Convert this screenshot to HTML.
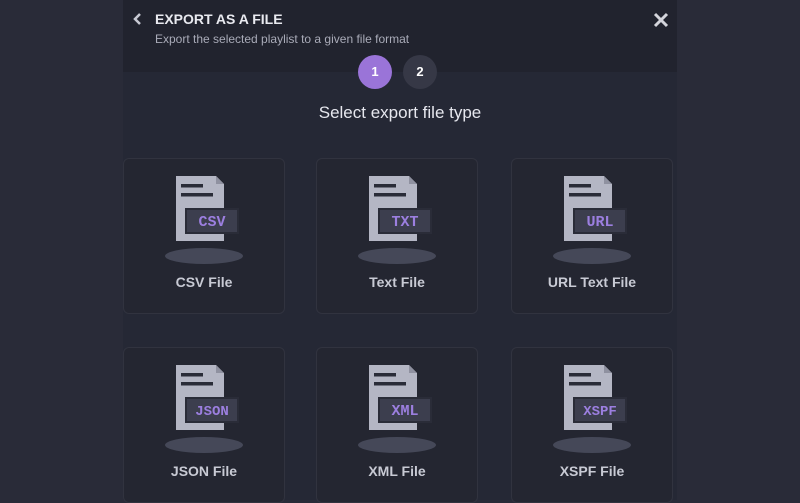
<!DOCTYPE html>
<html><head><style>
body{margin:0;width:800px;height:500px;background:#292b38;font-family:"Liberation Sans",sans-serif;overflow:hidden;position:relative}
.modal{position:absolute;left:123px;top:0;width:554px;height:500px;background:#252835}
.hdr{position:absolute;left:0;top:0;width:554px;height:72px;background:#21232e}
.t{position:absolute;left:32px;top:11px;color:#e9eaf0;font-weight:bold;font-size:14px}
.s{position:absolute;left:32px;top:32px;color:#a9abb8;font-size:12px}
.step{position:absolute;top:55px;width:34px;height:34px;border-radius:50%;color:#fff;font-weight:bold;font-size:13px;text-align:center;line-height:34px}
.h{position:absolute;left:0;width:554px;top:103px;text-align:center;color:#e6e7ee;font-size:17px}
.card{position:absolute;width:162px;height:156px;border:1px solid #31333f;border-radius:6px;background:#242631;box-sizing:border-box}
.card svg{position:absolute;left:38px;top:16px}
.card .l{position:absolute;left:0;right:0;top:115px;text-align:center;color:#c8cad4;font-size:14px;font-weight:bold}
</style></head><body>
<div class="modal">
<div class="hdr">
<svg style="position:absolute;left:9px;top:12px" width="12" height="14"><path d="M8 2 L3 7 L8 12" stroke="#c7c9d3" stroke-width="2.5" fill="none"/></svg>
<div class="t">EXPORT AS A FILE</div>
<div class="s">Export the selected playlist to a given file format</div>
<svg style="position:absolute;left:530px;top:12px" width="16" height="16"><path d="M2 2L14 14M14 2L2 14" stroke="#d4d5dc" stroke-width="3"/></svg>
</div>
<div class="step" style="left:235px;background:#9a74d8">1</div>
<div class="step" style="left:280px;background:#363846">2</div>
<div class="h">Select export file type</div>
</div>
<div id="cards"></div>
<script>
var d=[["CSV","CSV File",123,158],["TXT","Text File",316,158],["URL","URL Text File",511,158],["JSON","JSON File",123,347],["XML","XML File",316,347],["XSPF","XSPF File",511,347]];
var h="";
d.forEach(function(c){
h+='<div class="card" style="left:'+c[2]+'px;top:'+c[3]+'px"><svg width="90" height="110" viewBox="0 0 90 110"><path d="M14 1H54L62 9V66H14Z" fill="#b4b6c4"/><path d="M54 1V9H62" fill="#8f91a0"/><rect x="19" y="9" width="22" height="3.5" fill="#2a2c38"/><rect x="19" y="18" width="32" height="3.5" fill="#2a2c38"/><rect x="24" y="34" width="52" height="24" fill="#3c3e4e" stroke="#2a2c38" stroke-width="2"/><text x="50" y="51" text-anchor="middle" font-family="Liberation Mono,monospace" font-weight="bold" font-size="'+(c[0].length>3?14:15)+'" fill="#9c7fe0">'+c[0]+'</text><ellipse cx="42" cy="81" rx="39" ry="8" fill="#454858"/></svg><div class="l">'+c[1]+'</div></div>';
});
document.getElementById("cards").innerHTML=h;
</script>
</body></html>
